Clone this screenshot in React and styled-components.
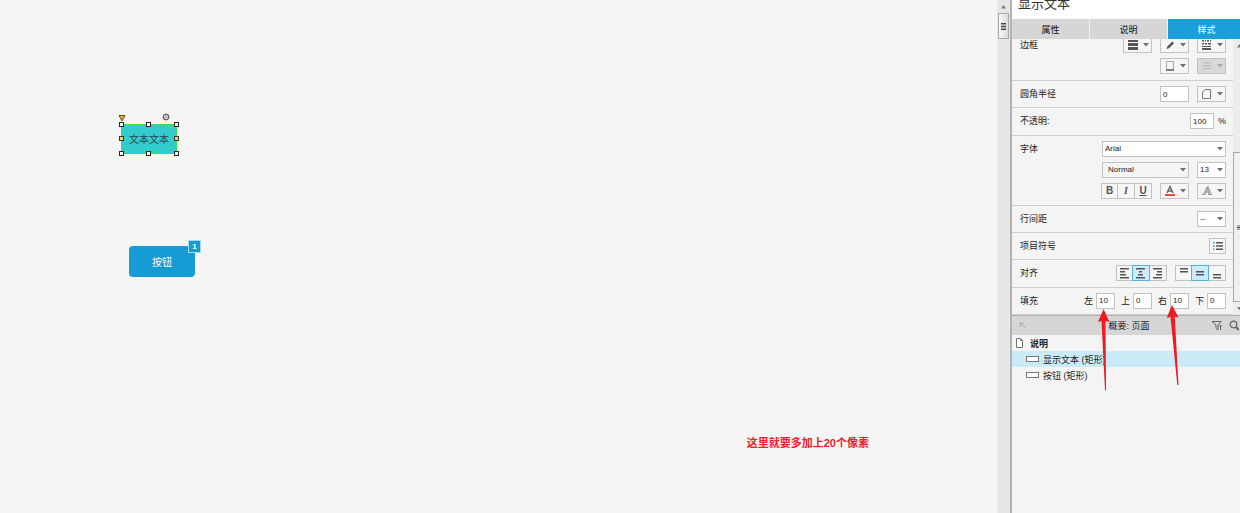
import styled, { createGlobalStyle } from "styled-components";

const GlobalStyle = createGlobalStyle`
    * {
        box-sizing: border-box;
    }

    body {
        margin: 0;
        overflow: hidden;
        background-color: #f5f5f5;
        color: #222;
        font-family: "Liberation Sans", "Noto Sans CJK SC", sans-serif;
        font-size: 9px;
    }

    button, input, select {
        margin: 0;
        padding: 0;
        border: none;
        border-radius: 0;
        color: inherit;
        font-family: inherit;
    }
`;

const Page = styled.div`
    display: flex;
    height: 100vh;
`;

const Canvas = styled.main`
    position: relative;
    flex: 1;
    background-color: #f5f5f5;
`;

const SelectedShape = styled.div`
    position: absolute;
    top: 124px;
    left: 121px;
    width: 56px;
    height: 30px;
    border: 1px solid #35e04c;
    background-color: #33cccc;
    color: #2b4545;
    font-size: 10px;
    line-height: 29px;
    text-align: center;
`;

const SelectionHandles = styled.svg`
    position: absolute;
    top: 110px;
    left: 115px;
`;

const ShapeButton = styled.button`
    position: absolute;
    top: 246px;
    left: 129px;
    width: 66px;
    height: 31px;
    border-radius: 4px;
    background-color: #169bd5;
    color: white;
    font-size: 10px;
`;

const Badge = styled.span`
    position: absolute;
    top: 240px;
    left: 188px;
    width: 13px;
    height: 13px;
    border: 1px solid #a9d9ef;
    background-color: #169bd5;
    color: white;
    font-size: 8px;
    font-weight: bold;
    line-height: 11px;
    text-align: center;
`;

const Note = styled.p`
    position: absolute;
    top: 435px;
    right: 128px;
    margin: 0;
    color: #f0202a;
    font-size: 11px;
    font-weight: bold;
    line-height: 16px;
`;

const CanvasScroll = styled.div`
    width: 13px;
    background-color: #e7e7e7;
    display: flex;
    flex-direction: column;
`;

const ScrollArrow = styled.div`
    width: 13px;
    height: 13px;
    display: flex;
    justify-content: center;
    align-items: center;
`;

const CanvasThumb = styled.div`
    height: 26px;
    margin: 0 1px;
    border: 1px solid #a8a8a8;
    background: linear-gradient(to right, #f8f8f8, #dcdcdc);
    display: flex;
    justify-content: center;
    align-items: center;
`;

const Sidebar = styled.aside`
    position: relative;
    width: 230px;
    border-left: 2px solid #b3b3b3;
    background-color: #f4f4f4;
    overflow: hidden;
`;

const Title = styled.h1`
    height: 19px;
    margin: 0;
    padding-left: 6px;
    background-color: white;
    color: #333;
    font-size: 13px;
    font-weight: normal;
    line-height: 8px;
`;

const Tabs = styled.div`
    display: grid;
    grid-template-columns: repeat(3, 78px);
    height: 20px;
`;

const Tab = styled.button`
    border-right: 1px solid #f0f0f0;
    background-color: ${(props) => (props.$active ? "#1a9fd9" : "#d6d6d6")};
    color: ${(props) => (props.$active ? "white" : "#111")};
    font-size: 9px;
`;

const StyleArea = styled.div`
    display: flex;
    height: 276px;
    overflow: hidden;
`;

const Properties = styled.div`
    flex: 1;
    display: grid;
    grid-template-rows: 42px 1fr 1fr 70px 1fr 1fr 1fr 1fr;
`;

const Row = styled.div`
    display: flex;
    justify-content: space-between;
    align-items: ${(props) => (props.$tall ? "flex-start" : "center")};
    padding: ${(props) => props.$pad || "0"} 7px 0 8px;
    border-bottom: 1px solid #cfcfcf;
    line-height: 16px;
`;

/* the list is scrolled down, so the first row is partly under the tabs */
const ScrolledRow = styled(Row)`
    margin-top: -2px;
`;

const Stack = styled.div`
    display: flex;
    flex-direction: column;
    align-items: flex-end;
    gap: ${(props) => props.$gap}px;
`;

const Group = styled.div`
    display: flex;
    align-items: center;
    gap: ${(props) => props.$gap || 0}px;
`;

const DropButton = styled.button`
    width: 29px;
    height: 16px;
    padding: 0 2px 0 3px;
    border: 1px solid #c2c2c2;
    background-color: ${(props) => (props.disabled ? "#d9d9d9" : "#f6f6f6")};
    display: flex;
    justify-content: space-between;
    align-items: center;
`;

const ToolButton = styled.button`
    position: relative;
    z-index: ${(props) => (props.$on ? 1 : 0)};
    width: ${(props) => props.$width || 17}px;
    height: 16px;
    border: 1px solid ${(props) => (props.$on ? "#52b5e0" : "#c2c2c2")};
    background-color: ${(props) => (props.$on ? "#cdebf8" : "#f6f6f6")};
    color: #555;
    font-size: 10px;
    display: flex;
    justify-content: center;
    align-items: center;

    & + & {
        width: 18px;
        margin-left: -1px;
    }
`;

const SerifItalic = styled.i`
    font-family: "Liberation Serif", serif;
    font-weight: bold;
`;

const Field = styled.input`
    width: ${(props) => props.$width}px;
    height: 16px;
    padding: 0 2px;
    border: 1px solid #c2c2c2;
    background-color: white;
    font-size: 8px;
`;

const SelectBox = styled.span`
    position: relative;
    display: block;
    width: ${(props) => props.$width}px;
    height: 16px;

    svg {
        position: absolute;
        top: 6px;
        right: 3px;
        pointer-events: none;
    }
`;

const Select = styled.select`
    appearance: none;
    display: block;
    width: 100%;
    height: 16px;
    padding-left: ${(props) => (props.$plain ? 5 : 2)}px;
    border: 1px solid #c2c2c2;
    background-color: ${(props) => (props.$plain ? "#f4f4f4" : "white")};
    font-size: 8px;
`;

const SideScroll = styled.div`
    width: 7px;
    background-color: #ececec;
    display: flex;
    flex-direction: column;
    overflow: hidden;
`;

const SideThumb = styled.div`
    flex: 0 0 150px;
    margin-top: 100px;
    border: 1px solid #a8a8a8;
    border-right: none;
    background-color: #f0f0f0;
    display: flex;
    align-items: center;
    padding-left: 3px;
`;

const OutlineHeader = styled.div`
    display: grid;
    grid-template-columns: 1fr auto 1fr;
    align-items: center;
    height: 20px;
    padding: 0 1px 0 7px;
    border-top: 1px solid #b0b0b0;
    background-color: #d6d6d6;
`;

const OutlineTools = styled.div`
    display: flex;
    justify-content: flex-end;
    gap: 6px;
`;

const OutlineItem = styled.div`
    display: flex;
    align-items: center;
    gap: ${(props) => (props.$child ? 4 : 7)}px;
    height: 16px;
    padding-left: ${(props) => (props.$child ? 14 : 4)}px;
    background-color: ${(props) => (props.$selected ? "#caeaf8" : "transparent")};
    font-weight: ${(props) => (props.$child ? "normal" : "bold")};
`;

const RectIcon = styled.span`
    width: 13px;
    height: 6px;
    border: 1px solid #777;
    background-color: white;
`;

const Arrows = styled.svg`
    position: absolute;
    top: 300px;
    left: 80px;
    pointer-events: none;
`;

const Caret = () => (
    <svg width="6" height="4" viewBox="0 0 6 4">
        <path d="M0 0h6L3 3.6z" fill="#707070" />
    </svg>
);

const Bars = ({ lines, color = "#555" }) => (
    <svg width="12" height="12" viewBox="0 0 12 12" fill={color}>
        {lines.map(([x, y, width, height = 1.5]) => (
            <rect key={`${x}-${y}`} x={x} y={y} width={width} height={height} />
        ))}
    </svg>
);

const Grip = () => (
    <svg width="5" height="7" viewBox="0 0 5 7" fill="#444">
        <path d="M0 0h5v1.500H0zM0 2.700h5v1.500H0zM0 5.400h5v1.500H0z" />
    </svg>
);

const dashes = [
    [1, 1, 2], [4, 1, 1], [6, 1, 2], [9, 1, 1],
    [1, 4, 2], [4, 4, 2], [7, 4, 3],
    [1, 7, 9, 1], [1, 9, 9, 2],
];

const horizontal = [
    { label: "左对齐", lines: [[1, 1, 9], [1, 4, 5], [1, 7, 6], [1, 10, 9]] },
    { label: "居中", lines: [[1, 1, 9], [4, 4, 3], [3, 7, 5], [1, 10, 9]], on: true },
    { label: "右对齐", lines: [[1, 1, 9], [5, 4, 5], [4, 7, 6], [1, 10, 9]] },
];

const vertical = [
    { label: "顶部", lines: [[2, 1, 8], [2, 4, 8]] },
    { label: "中部", lines: [[2, 4, 8], [2, 7, 8]], on: true },
    { label: "底部", lines: [[2, 7, 8], [2, 10, 8]] },
];

const padding = [
    ["左", "10"],
    ["上", "0"],
    ["右", "10"],
    ["下", "0"],
];

const PaddingLabel = styled.label`
    display: flex;
    align-items: center;
    gap: 3px;
`;

const handlePoints = [
    [7, 15], [34, 15], [62, 15],
    [7, 44], [34, 44], [62, 44],
];

const Selection = () => (
    <SelectionHandles width="70" height="50" viewBox="0 0 70 50">
        <path d="M4 5.500h6L7 11z" fill="#f6a623" stroke="#6b5312" />
        <circle cx="51" cy="7" r="3" fill="#bdbdbd" stroke="#555" />
        {handlePoints.map(([x, y]) => (
            <rect key={`${x}-${y}`} x={x - 2.5} y={y - 2.5} width="4" height="4" fill="white" stroke="#222" />
        ))}
        {[7, 62].map((x) => (
            <rect key={x} x={x - 2.5} y="26.500" width="4" height="4" fill="#e6dc6a" stroke="#333" />
        ))}
    </SelectionHandles>
);

const App = () => {
    return (
        <Page>
            <GlobalStyle />
            <Canvas>
                <SelectedShape>文本文本</SelectedShape>
                <Selection />
                <ShapeButton>按钮</ShapeButton>
                <Badge>1</Badge>
                <Note>这里就要多加上20个像素</Note>
            </Canvas>
            <CanvasScroll>
                <ScrollArrow>
                    <svg width="5" height="4" viewBox="0 0 5 4">
                        <path d="M0 3.500h5L2.500 0z" fill="#777" />
                    </svg>
                </ScrollArrow>
                <CanvasThumb>
                    <Grip />
                </CanvasThumb>
            </CanvasScroll>
            <Sidebar>
                <Title>显示文本</Title>
                <Tabs>
                    <Tab>属性</Tab>
                    <Tab>说明</Tab>
                    <Tab $active>样式</Tab>
                </Tabs>
                <StyleArea>
                    <Properties>
                        <ScrolledRow $tall>
                            <span>边框</span>
                            <Stack $gap={5}>
                                <Group $gap={8}>
                                    <DropButton aria-label="线宽">
                                        <Bars lines={[[1, 1, 10, 2], [1, 4, 10, 3], [1, 8, 10, 3]]} />
                                        <Caret />
                                    </DropButton>
                                    <DropButton aria-label="线条颜色">
                                        <svg width="12" height="12" viewBox="0 0 12 12">
                                            <path d="M2.500 10l.8-2.500L8.300 2.500l1.700 1.700-5 5z" fill="#555" />
                                        </svg>
                                        <Caret />
                                    </DropButton>
                                    <DropButton aria-label="线型">
                                        <Bars lines={dashes} />
                                        <Caret />
                                    </DropButton>
                                </Group>
                                <Group $gap={8}>
                                    <DropButton aria-label="边框可见性">
                                        <svg width="12" height="12" viewBox="0 0 12 12">
                                            <path d="M2.500 9.500V1.500h7v8" fill="none" stroke="#aaa" />
                                            <path d="M2 10h8" stroke="#555" strokeWidth="1.500" />
                                        </svg>
                                        <Caret />
                                    </DropButton>
                                    <DropButton aria-label="箭头样式" disabled>
                                        <Bars lines={[[2, 2, 8], [2, 5, 8], [2, 8, 8]]} color="#c2c2c2" />
                                        <svg width="6" height="4" viewBox="0 0 6 4">
                                            <path d="M0 0h6L3 3.6z" fill="#aaa" />
                                        </svg>
                                    </DropButton>
                                </Group>
                            </Stack>
                        </ScrolledRow>
                        <Row>
                            <label htmlFor="radius">圆角半径</label>
                            <Group $gap={8}>
                                <Field id="radius" $width={29} defaultValue="0" />
                                <DropButton aria-label="圆角">
                                    <svg width="12" height="12" viewBox="0 0 12 12">
                                        <path d="M1.500 10.500V6q0-4.500 4.500-4.500h3.500v9z" fill="none" stroke="#777" />
                                    </svg>
                                    <Caret />
                                </DropButton>
                            </Group>
                        </Row>
                        <Row>
                            <label htmlFor="opacity">不透明:</label>
                            <Group $gap={4}>
                                <Field id="opacity" $width={24} defaultValue="100" />
                                <span>%</span>
                            </Group>
                        </Row>
                        <Row $tall $pad="5px">
                            <label htmlFor="font">字体</label>
                            <Stack $gap={5}>
                                <SelectBox $width={124}>
                                    <Select id="font">
                                        <option>Arial</option>
                                    </Select>
                                    <Caret />
                                </SelectBox>
                                <Group $gap={8}>
                                    <SelectBox $width={87}>
                                        <Select $plain aria-label="字形">
                                            <option>Normal</option>
                                        </Select>
                                        <Caret />
                                    </SelectBox>
                                    <SelectBox $width={29}>
                                        <Select aria-label="字号">
                                            <option>13</option>
                                        </Select>
                                        <Caret />
                                    </SelectBox>
                                </Group>
                                <Group $gap={8}>
                                    <Group>
                                        <ToolButton><b>B</b></ToolButton>
                                        <ToolButton><SerifItalic>I</SerifItalic></ToolButton>
                                        <ToolButton><b><u>U</u></b></ToolButton>
                                    </Group>
                                    <DropButton aria-label="文字颜色">
                                        <svg width="12" height="12" viewBox="0 0 12 12">
                                            <path d="M3 8l3-6.500L9 8M4 6h4" fill="none" stroke="#666" strokeWidth="1.500" />
                                            <path d="M1 9h10v2H1z" fill="#f04a3c" />
                                        </svg>
                                        <Caret />
                                    </DropButton>
                                    <DropButton aria-label="文字阴影">
                                        <svg width="12" height="12" viewBox="0 0 12 12" fill="none">
                                            <path d="M4 9.500l3-7.500 3 7.500M5 7h4" stroke="#aaa" strokeWidth="1.500" />
                                            <path d="M1 9.500h3M7 9.500h4M2.500 9l3.500-7 2 7" stroke="#999" />
                                        </svg>
                                        <Caret />
                                    </DropButton>
                                </Group>
                            </Stack>
                        </Row>
                        <Row>
                            <label htmlFor="leading">行间距</label>
                            <SelectBox $width={29}>
                                <Select id="leading">
                                    <option>--</option>
                                </Select>
                                <Caret />
                            </SelectBox>
                        </Row>
                        <Row>
                            <span>项目符号</span>
                            <ToolButton aria-label="项目符号">
                                <svg width="12" height="12" viewBox="0 0 12 12">
                                    <path d="M4 2h7v1.500H4zM4 5.200h7v1.500H4zM4 8.400h7v1.500H4z" fill="#555" />
                                    <path d="M1 2h1.500v1.500H1zM1 5.200h1.500v1.500H1zM1 8.400h1.500v1.500H1z" fill="#1a9fd9" />
                                </svg>
                            </ToolButton>
                        </Row>
                        <Row>
                            <span>对齐</span>
                            <Group $gap={8}>
                                <Group>
                                    {horizontal.map((item) => (
                                        <ToolButton key={item.label} aria-label={item.label} $on={item.on}>
                                            <Bars lines={item.lines} />
                                        </ToolButton>
                                    ))}
                                </Group>
                                <Group>
                                    {vertical.map((item) => (
                                        <ToolButton key={item.label} aria-label={item.label} $on={item.on}>
                                            <Bars lines={item.lines} />
                                        </ToolButton>
                                    ))}
                                </Group>
                            </Group>
                        </Row>
                        <Row>
                            <span>填充</span>
                            <Group $gap={6}>
                                {padding.map(([label, value]) => (
                                    <PaddingLabel key={label}>
                                        {label}
                                        <Field $width={19} defaultValue={value} />
                                    </PaddingLabel>
                                ))}
                            </Group>
                        </Row>
                    </Properties>
                    <SideScroll>
                        <ScrollArrow>
                            <svg width="5" height="4" viewBox="0 0 5 4">
                                <path d="M0 3.500h5L2.500 0z" fill="#777" />
                            </svg>
                        </ScrollArrow>
                        <SideThumb>
                            <Grip />
                        </SideThumb>
                        <ScrollArrow>
                            <Caret />
                        </ScrollArrow>
                    </SideScroll>
                </StyleArea>
                <OutlineHeader>
                    <svg width="7" height="7" viewBox="0 0 7 7">
                        <path d="M6 6L1 1M1 5V1h4" fill="none" stroke="#aaa" />
                    </svg>
                    <span>概要: 页面</span>
                    <OutlineTools>
                        <svg width="12" height="11" viewBox="0 0 12 11" fill="none" stroke="#666">
                            <path d="M1 1.500h9L7 5v5L5 8.500V5zM9.500 10V5M8 6.500L9.500 5 11 6.500" />
                        </svg>
                        <svg width="10" height="11" viewBox="0 0 10 11" fill="none" stroke="#666">
                            <circle cx="4.500" cy="4.500" r="3.300" strokeWidth="1.300" />
                            <path d="M7 7l2.800 3" strokeWidth="2" />
                        </svg>
                    </OutlineTools>
                </OutlineHeader>
                <OutlineItem>
                    <svg width="7" height="10" viewBox="0 0 7 10">
                        <path d="M.5.5h4l2 2v7h-6zM4.500.5v2h2" fill="white" stroke="#777" />
                    </svg>
                    说明
                </OutlineItem>
                <OutlineItem $child $selected>
                    <RectIcon />
                    显示文本 (矩形)
                </OutlineItem>
                <OutlineItem $child>
                    <RectIcon />
                    按钮 (矩形)
                </OutlineItem>
                <Arrows width="110" height="95" viewBox="0 0 110 95" fill="#ed1c24">
                    <path d="M11.500 9L17.500 22l-4-1 .5 69.500h-1L9.500 21 6 22z" />
                    <path d="M80 5l6.500 12.500-3.700-.8L86.500 85h-1.200L78.500 17l-3.800 1z" />
                </Arrows>
            </Sidebar>
        </Page>
    );
};

export default App;
